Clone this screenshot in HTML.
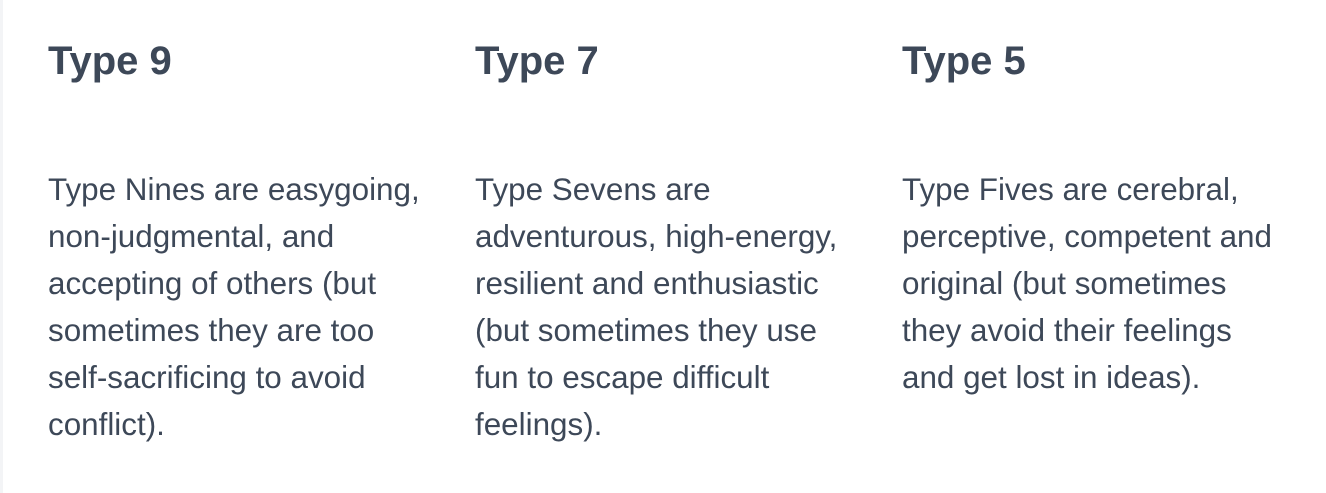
<!DOCTYPE html>
<html><head><style>
html,body{margin:0;padding:0;background:#fff;width:1326px;height:493px;overflow:hidden}
body{font-family:"Liberation Sans",Arial,sans-serif;color:#3d4858;position:relative}
.strip{position:absolute;left:0;top:0;width:3px;height:493px;background:#f3f4f6}
.col{position:absolute;top:0;width:420px}
h2{position:absolute;top:37px;left:0;margin:0;font-size:40px;font-weight:bold;line-height:48px;white-space:nowrap}
p{position:absolute;top:166px;left:0;margin:0;font-size:31.4px;line-height:47px;white-space:nowrap}
</style></head><body>
<div class="strip"></div>
<div class="col" style="left:48px"><h2>Type 9</h2><p>Type Nines are easygoing,<br>non-judgmental, and<br>accepting of others (but<br>sometimes they are too<br>self-sacrificing to avoid<br>conflict).</p></div>
<div class="col" style="left:475px"><h2>Type 7</h2><p>Type Sevens are<br>adventurous, high-energy,<br>resilient and enthusiastic<br>(but sometimes they use<br>fun to escape difficult<br>feelings).</p></div>
<div class="col" style="left:902px"><h2>Type 5</h2><p>Type Fives are cerebral,<br>perceptive, competent and<br>original (but sometimes<br>they avoid their feelings<br>and get lost in ideas).</p></div>
</body></html>
